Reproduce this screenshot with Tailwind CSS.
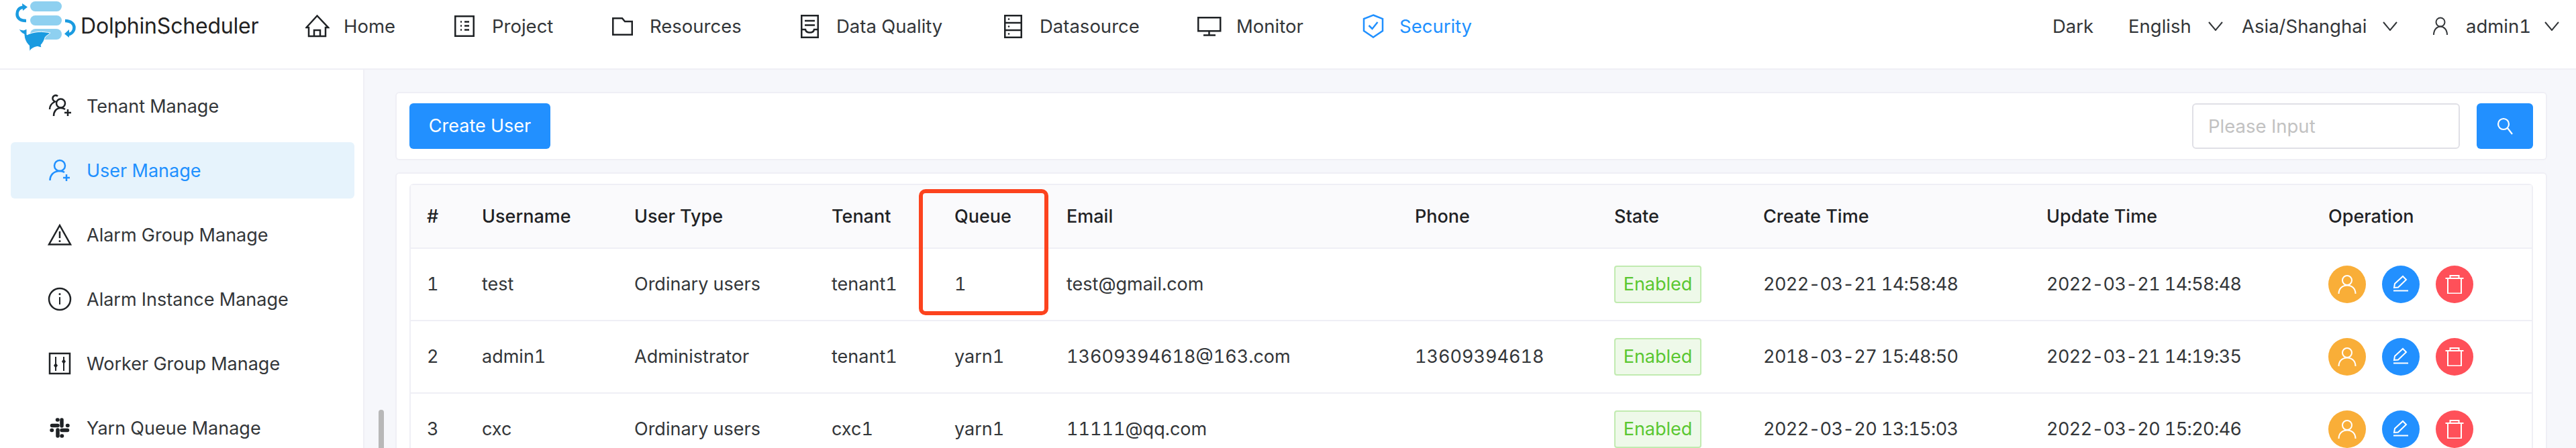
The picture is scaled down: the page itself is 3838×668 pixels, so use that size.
<!DOCTYPE html>
<html lang="en">
<head>
  <meta charset="UTF-8" />
  <title>DolphinScheduler</title>
  <script src="https://cdn.jsdelivr.net/npm/@tailwindcss/browser@4"></script>
</head>
<body class="h-[668px] overflow-hidden bg-[#f6f7fb] font-[Inter,sans-serif] text-[27px] leading-[36px] text-[#333639] tabular-nums">
  <!-- top bar -->
  <header class="flex h-[104px] items-start border-b-2 border-[#efeff5] bg-white text-[27.5px]">
    <div class="relative h-[102px] w-[455px] shrink-0">
      <svg class="absolute left-0 top-0" width="120" height="80" viewBox="0 0 120 80" fill="none">
        <rect x="45" y="2" width="47" height="15" rx="7.500" fill="#8ed0f0"/>
        <rect x="45" y="23" width="47" height="15" rx="7.500" fill="#8ed0f0"/>
        <rect x="45" y="43" width="47" height="16" rx="8" fill="#8ed0f0"/>
        <path d="M36 10.500 C28 11 25.500 16 25.500 21 C25.500 27 30 31 39 31" stroke="#1a9be0" stroke-width="4.500"/>
        <path d="M33 5 L41 10.500 L34 16 Z" fill="#1a9be0"/>
        <path d="M97 31 C106 31 110.500 36 110.500 41 C110.500 47 106 51 100 51.500" stroke="#1a9be0" stroke-width="4.500"/>
        <path d="M103 44 L96 50.500 L103 56 Z" fill="#1a9be0"/>
        <path d="M28 43.500 L35 45 L40 43 L40 52 C44 50 50 48 57 47.500 C63 47 69 48 75 49 C72 52 69 53.500 67.500 55 C66 60 64 64 61 67 L62 71 L56 69.500 C52 70 50 71 47 73 L44 76.500 L43.500 68 C38 63 36 56 36 51 C33 50 30 47 28 43.500 Z" fill="#1a9be0" stroke="white" stroke-width="1"/>
      </svg>
      <span class="absolute left-[120px] top-[21px] text-[32px] leading-[36px] tracking-[-0.2px] text-[#222222]">DolphinScheduler</span>
    </div>

    <nav class="flex h-[78px] flex-1 items-center">
      <a class="flex w-[222px] items-center gap-[21px]">
        <svg class="shrink-0" width="36" height="36" viewBox="0 0 36 36" fill="none" stroke="#1f2225" stroke-width="2.500"><path d="M1.500 20 L17.500 2.500 L34 20 H30 V33 H5 V20 Z"/><path d="M13 33 V24 H22 V33"/></svg>
        <span>Home</span>
      </a>
      <a class="flex w-[235px] items-center gap-[26px]">
        <svg class="shrink-0" width="30" height="32" viewBox="0 0 30 32" fill="none" stroke="#1f2225" stroke-width="2.500"><rect x="1.250" y="1.250" width="27.500" height="29.500"/><path d="M9 9.500 H11 M9 15.500 H11 M9 21.500 H11 M15 9.500 H22 M15 15.500 H22 M15 21.500 H22"/></svg>
        <span>Project</span>
      </a>
      <a class="flex w-[281px] items-center gap-[25px]">
        <svg class="shrink-0" width="31" height="27" viewBox="0 0 31 27" fill="none" stroke="#1f2225" stroke-width="2.500"><path d="M1.250 1.250 H15 L19 6 H29.750 V25.750 H1.250 Z"/></svg>
        <span>Resources</span>
      </a>
      <a class="flex w-[303px] items-center gap-[26px]">
        <svg class="shrink-0" width="27" height="35" viewBox="0 0 27 35" fill="none" stroke="#1f2225" stroke-width="2.500"><rect x="1.250" y="1.250" width="24.500" height="32.500"/><path d="M6 9 H21 M6 15.500 H21 M1.500 22 H7 C8 28 19 28 20 22 H25.500"/></svg>
        <span>Data Quality</span>
      </a>
      <a class="flex w-[288px] items-center gap-[26px]">
        <svg class="shrink-0" width="27" height="35" viewBox="0 0 27 35" fill="none" stroke="#1f2225" stroke-width="2.500"><rect x="1.250" y="1.250" width="24.500" height="32.500"/><path d="M1 12 H26 M1 23 H26"/><circle cx="7" cy="6.500" r="1.300" fill="#1f2225" stroke="none"/><circle cx="7" cy="17.500" r="1.300" fill="#1f2225" stroke="none"/><circle cx="7" cy="28.500" r="1.300" fill="#1f2225" stroke="none"/></svg>
        <span>Datasource</span>
      </a>
      <a class="flex w-[246px] items-center gap-[22px]">
        <svg class="shrink-0" width="36" height="29" viewBox="0 0 36 29" fill="none" stroke="#1f2225" stroke-width="2.500"><rect x="1.250" y="1.250" width="33" height="20"/><path d="M17.500 21 V27.500 M9 27.500 H27"/></svg>
        <span>Monitor</span>
      </a>
      <a class="flex items-center gap-[23px] text-[#2090ff]">
        <svg class="shrink-0" width="32" height="36" viewBox="0 0 32 36" fill="none" stroke="#2090ff" stroke-width="2.500"><path d="M16 1.500 L30 7 V25 L16 34.500 L2 25 V7 Z"/><path d="M9.500 17 L14.500 22 L22.500 12"/></svg>
        <span>Security</span>
      </a>
    </nav>

    <div class="mr-[25px] flex h-[78px] items-center">
      <span class="w-[113px]">Dark</span>
      <span class="w-[119px]">English</span>
      <svg class="mr-[28px]" width="22" height="14" viewBox="0 0 22 14" fill="none" stroke="#333639" stroke-width="2"><path d="M1 1 L11 13 L21 1"/></svg>
      <span class="w-[210px]">Asia/Shanghai</span>
      <svg class="mr-[53px]" width="22" height="14" viewBox="0 0 22 14" fill="none" stroke="#333639" stroke-width="2"><path d="M1 1 L11 13 L21 1"/></svg>
      <svg class="mr-[27px]" width="22" height="28" viewBox="0 0 22 28" fill="none" stroke="#333639" stroke-width="2"><circle cx="11" cy="8" r="6.500"/><path d="M1 27 C1 19 6 14.500 11 14.500 C16 14.500 21 19 21 27"/></svg>
      <span class="w-[117px]">admin1</span>
      <svg width="22" height="14" viewBox="0 0 22 14" fill="none" stroke="#333639" stroke-width="2"><path d="M1 1 L11 13 L21 1"/></svg>
    </div>
  </header>

  <div class="relative flex h-[564px]">
    <!-- side menu -->
    <aside class="h-full w-[543px] shrink-0 overflow-hidden border-r-2 border-[#efeff5] bg-white pl-[16px] pr-[13px] pt-[12px]">
      <a class="mb-[12px] flex h-[84px] items-center gap-[22px] pl-[55px]">
        <svg class="shrink-0" width="36" height="36" viewBox="0 0 36 36" fill="none" stroke="#1f2225" stroke-width="2.500"><circle cx="19.500" cy="14" r="6.500"/><path d="M9 33 C9 26 13 21 19.500 21 C22 21 24 21.500 26 23"/><path d="M15 3.500 C12 0.500 7 3 7.500 7.500 C8 9.500 9.500 11 11 11.500 C7 13.500 3 17 3 23"/><path d="M30 23 V33 M25 28 H35"/></svg>
        <span class="pt-[2px]">Tenant Manage</span>
      </a>
      <a class="mb-[12px] flex h-[84px] items-center gap-[22px] rounded-[6px] bg-[#e6f3fc] pl-[55px] text-[#2090ff]">
        <svg class="shrink-0" width="36" height="36" viewBox="0 0 36 36" fill="none" stroke="#2090ff" stroke-width="2.500"><circle cx="18" cy="11" r="8"/><path d="M3.500 33 C3.500 25 9 19 18 19 C21 19 23 19.500 25 21"/><path d="M28 24 V34 M23 29 H33"/></svg>
        <span class="pt-[2px]">User Manage</span>
      </a>
      <a class="mb-[12px] flex h-[84px] items-center gap-[22px] pl-[55px]">
        <svg class="shrink-0" width="36" height="36" viewBox="0 0 36 36" fill="none" stroke="#1f2225" stroke-width="2.500"><path d="M18 4 L34 32.500 H2 Z"/><path d="M18 13 V23"/><circle cx="18" cy="27.500" r="1.500" fill="#1f2225" stroke="none"/></svg>
        <span class="pt-[2px]">Alarm Group Manage</span>
      </a>
      <a class="mb-[12px] flex h-[84px] items-center gap-[22px] pl-[55px]">
        <svg class="shrink-0" width="36" height="36" viewBox="0 0 36 36" fill="none" stroke="#1f2225" stroke-width="2.500"><circle cx="18" cy="18" r="16"/><path d="M18 15 V26" stroke-width="2"/><circle cx="18" cy="10.500" r="1.500" fill="#1f2225" stroke="none"/></svg>
        <span class="pt-[2px]">Alarm Instance Manage</span>
      </a>
      <a class="mb-[12px] flex h-[84px] items-center gap-[22px] pl-[55px]">
        <svg class="shrink-0" width="36" height="36" viewBox="0 0 36 36" fill="none" stroke="#1f2225" stroke-width="2.500"><rect x="3" y="3" width="30" height="30"/><path d="M12 8 V29 M24 8 V29" stroke-width="2"/><path d="M12 17 L15 21 L12 25 L9 21 Z M24 11 L27 15 L24 19 L21 15 Z" fill="#1f2225" stroke="none"/></svg>
        <span class="pt-[2px]">Worker Group Manage</span>
      </a>
      <a class="mb-[12px] flex h-[84px] items-center gap-[22px] pl-[55px]">
        <svg class="shrink-0" width="36" height="36" viewBox="0 0 36 36" fill="none" stroke="#1f2225" stroke-width="5.500" stroke-linecap="round"><path d="M6.500 14.500 H15 M21 6 V15 M29.500 21.500 H21 M15 30 V21"/><path d="M14.500 6 H15 M29.500 14.500 H30 M21 30 H21.500 M6 21.500 H6.500"/></svg>
        <span class="pt-[2px]">Yarn Queue Manage</span>
      </a>
    </aside>
    <div class="absolute left-[564px] top-[507px] h-[60px] w-[8px] rounded-full bg-[#b8b8b8]"></div>

    <!-- content -->
    <main class="min-w-0 flex-1 pl-[46px] pr-[43px] pt-[33px]">
      <div class="flex h-[102px] items-center justify-between rounded-[6px] border-2 border-[#efeff5] bg-white pl-[19px] pr-[19px]">
        <button class="h-[68px] w-[210px] rounded-[6px] bg-[#2290ff] text-white">Create User</button>
        <div class="flex items-center gap-[25px]">
          <div class="flex h-[68px] w-[399px] items-center rounded-[6px] border-2 border-[#e0e0e6] bg-white pl-[22px] text-[27.5px] text-[#c2c2c2]">Please Input</div>
          <button class="flex h-[68px] w-[84px] items-center justify-center rounded-[6px] bg-[#2290ff]">
            <svg width="26" height="28" viewBox="0 0 26 28" fill="none" stroke="white" stroke-width="2.200"><circle cx="11" cy="11" r="8"/><path d="M17 17 L24 26"/></svg>
          </button>
        </div>
      </div>

      <div class="mt-[18px] rounded-[6px] border-2 border-[#efeff5] bg-white pl-[19px] pr-[19px] pt-[15px]">
        <div class="relative">
          <table class="w-full table-fixed border-separate border-spacing-0 rounded-t-[6px] border-2 border-b-0 border-[#efeff5]">
            <colgroup>
              <col class="w-[82px]"/><col class="w-[227px]"/><col class="w-[294px]"/><col class="w-[183px]"/><col class="w-[167px]"/><col class="w-[519px]"/><col class="w-[297px]"/><col class="w-[222px]"/><col class="w-[422px]"/><col class="w-[420px]"/><col/>
            </colgroup>
            <thead>
              <tr class="h-[95px] bg-[#fafafc] text-left text-[#1f2225]">
                <th class="border-b-2 border-[#efeff5] pl-[24px] font-medium">#</th>
                <th class="border-b-2 border-[#efeff5] pl-[24px] font-medium">Username</th>
                <th class="border-b-2 border-[#efeff5] pl-[24px] font-medium">User Type</th>
                <th class="border-b-2 border-[#efeff5] pl-[24px] font-medium">Tenant</th>
                <th class="border-b-2 border-[#efeff5] pl-[24px] font-medium">Queue</th>
                <th class="border-b-2 border-[#efeff5] pl-[24px] font-medium">Email</th>
                <th class="border-b-2 border-[#efeff5] pl-[24px] font-medium">Phone</th>
                <th class="border-b-2 border-[#efeff5] pl-[24px] font-medium">State</th>
                <th class="border-b-2 border-[#efeff5] pl-[24px] font-medium">Create Time</th>
                <th class="border-b-2 border-[#efeff5] pl-[24px] font-medium">Update Time</th>
                <th class="border-b-2 border-[#efeff5] pl-[24px] font-medium">Operation</th>
              </tr>
            </thead>
            <tbody id="rows"></tbody>
          </table>
          <!-- annotation drawn over the Queue column -->
          <div class="absolute left-[759px] top-[8px] h-[188px] w-[193px] rounded-[10px] border-[6px] border-[#fc431e]"></div>
        </div>
      </div>
    </main>
  </div>

  <script>
    const users = [
      ['1', 'test', 'Ordinary users', 'tenant1', '1', 'test@gmail.com', '', '2022-03-21 14:58:48', '2022-03-21 14:58:48'],
      ['2', 'admin1', 'Administrator', 'tenant1', 'yarn1', '13609394618@163.com', '13609394618', '2018-03-27 15:48:50', '2022-03-21 14:19:35'],
      ['3', 'cxc', 'Ordinary users', 'cxc1', 'yarn1', '11111@qq.com', '', '2022-03-20 13:15:03', '2022-03-20 15:20:46']
    ];
    const td = 'border-b-2 border-[#efeff5] pl-[24px]';
    const dateTd = 'border-b-2 border-[#efeff5] pl-[24px] tracking-[-0.6px]';

    document.getElementById('rows').innerHTML = users.map(u => `
      <tr class="h-[108px]">
        ${u.slice(0, 7).map(v => `<td class="${td}">${v}</td>`).join('')}
        <td class="${td}"><span class="flex h-[56px] w-[130px] items-center justify-center rounded-[4px] border-2 border-[#c1ebb0] bg-[#eef9e9] text-[#5ac731]">Enabled</span></td>
        <td class="${dateTd}">${u[7]}</td>
        <td class="${dateTd}">${u[8]}</td>
        <td class="${td}">
          <div class="flex gap-[24px]">
            <button class="flex h-[56px] w-[56px] items-center justify-center rounded-full bg-[#f9ae38]">
              <svg width="28" height="28" viewBox="0 0 28 28" fill="none" stroke="white" stroke-width="2"><circle cx="14" cy="8" r="7"/><path d="M1.500 28 C1.500 20 7 15.500 14 15.500 C21 15.500 26.500 20 26.500 28"/></svg>
            </button>
            <button class="flex h-[56px] w-[56px] items-center justify-center rounded-full bg-[#2290ff]">
              <svg width="28" height="28" viewBox="0 0 28 28" fill="none" stroke="white" stroke-width="2"><path d="M4 19 L5 13 L17 2 L22 7 L10 18.500 Z"/><path d="M3 23.500 H25"/></svg>
            </button>
            <button class="flex h-[56px] w-[56px] items-center justify-center rounded-full bg-[#ff5059]">
              <svg width="28" height="28" viewBox="0 0 28 28" fill="none" stroke="white" stroke-width="2"><path d="M0.500 5 H27.500 M7.500 5 V1 H20.500 V5 M4 5 V27.500 H24 V5"/></svg>
            </button>
          </div>
        </td>
      </tr>`).join('');
  </script>
</body>
</html>
